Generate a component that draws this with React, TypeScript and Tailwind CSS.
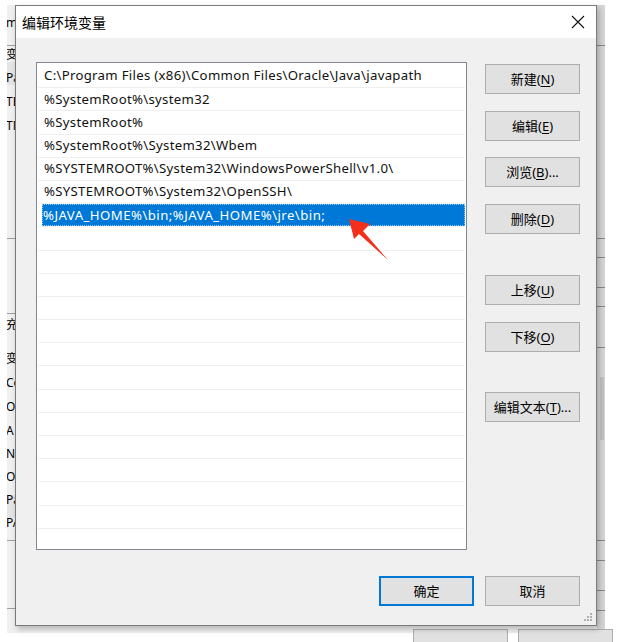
import React from "react";

const rows = [
  "C:\\Program Files (x86)\\Common Files\\Oracle\\Java\\javapath",
  "%SystemRoot%\\system32",
  "%SystemRoot%",
  "%SystemRoot%\\System32\\Wbem",
  "%SYSTEMROOT%\\System32\\WindowsPowerShell\\v1.0\\",
  "%SYSTEMROOT%\\System32\\OpenSSH\\",
  "%JAVA_HOME%\\bin;%JAVA_HOME%\\jre\\bin;",
];

const FONT = { fontFamily: '"Noto Sans", "Noto Sans CJK SC", sans-serif' };

function Btn({
  label,
  u,
  rest,
  primary,
  className,
}: {
  label: string;
  u?: string;
  rest?: string;
  primary?: boolean;
  className?: string;
}) {
  return (
    <div
      className={
        "h-[30px] w-[95px] flex items-center justify-center bg-[#e1e1e1] text-[13px] text-black leading-none " +
        (primary ? "border-2 border-[#0078d7] " : "border border-[#adadad] ") +
        (className || "")
      }
    >
      <span>
        {label}
        {u !== undefined && (
          <>
            (<span className="underline underline-offset-2">{u}</span>){rest}
          </>
        )}
      </span>
    </div>
  );
}

export default function App() {
  const leftTop = [
    { t: "m", y: 17 },
    { t: "变", y: 49 },
    { t: "Pa", y: 72 },
    { t: "TE", y: 96 },
    { t: "TN", y: 120 },
  ];
  const leftBottom = [
    { t: "充", y: 319 },
    { t: "变", y: 353 },
    { t: "Co", y: 377 },
    { t: "Or", y: 401 },
    { t: "A", y: 425 },
    { t: "NU", y: 448 },
    { t: "OS", y: 471 },
    { t: "Pa", y: 494 },
    { t: "PA", y: 517 },
  ];
  const rightLines = [45, 238, 257, 287, 306, 347, 540, 560, 590, 610];
  const leftLines = [45, 238, 313, 540, 608];
  const listRows = Array.from({ length: 21 }, (_, i) => rows[i] ?? "");

  return (
    <div className="relative w-[632px] h-[642px] bg-white overflow-hidden" style={FONT}>
      {/* underlying window */}
      <div className="absolute left-[7px] top-[5px] w-[598px] h-[628px] bg-[#f0f0f0] overflow-hidden">
        {leftLines.map((y) => (
          <div key={"l" + y} className="absolute left-0 w-[8px] h-px bg-[#a0a0a0]" style={{ top: y - 5 }} />
        ))}
        <div className="absolute left-0 top-[57px] w-[8px] h-[23px] bg-[#e5e5e5]" />
        <div className="absolute left-0 top-[490px] w-[8px] h-[23px] bg-[#e5e5e5]" />
        {[...leftTop, ...leftBottom].map((it, i) => (
          <div
            key={i}
            className="absolute left-[-1px] text-[12px] leading-none text-black whitespace-nowrap"
            style={{ top: it.y - 5 }}
          >
            {it.t}
          </div>
        ))}
        <div className="absolute left-[590px] top-0 w-[8px] h-[628px] bg-[#d6d6d6]" />
        {rightLines.map((y) => (
          <div key={"r" + y} className="absolute left-[590px] w-[8px] h-px bg-[#8a8a8a]" style={{ top: y - 5 }} />
        ))}
        <div className="absolute left-[593px] top-[372px] w-[4px] h-[63px] bg-[#c2c2c2]" />
      </div>
      {/* peeking buttons of underlying window */}
      <div className="absolute left-[413px] top-[629px] w-[95px] h-[20px] bg-[#e1e1e1] border border-[#adadad]" />
      <div className="absolute left-[518px] top-[629px] w-[95px] h-[20px] bg-[#e1e1e1] border border-[#adadad]" />

      {/* dialog */}
      <div className="absolute left-[15px] top-[5px] w-[582px] h-[621px] border border-[#7a7a7a] flex flex-col shadow-[2px_3px_6px_rgba(0,0,0,0.25)]">
        <div className="h-[32px] bg-white flex items-center justify-between pl-[6px] pr-[10px]">
          <span className="text-[14px] text-black">编辑环境变量</span>
          <svg width="16" height="16" viewBox="0 0 16 16">
            <path d="M2 2 L14 14 M14 2 L2 14" stroke="#111" strokeWidth="1.1" fill="none" />
          </svg>
        </div>
        <div className="relative flex-1 bg-[#f0f0f0] pt-[24px] pl-[20px] pr-[16px] pb-[19px] flex flex-col">
          <div className="flex gap-[18px]">
            <div className="w-[432px] h-[488px] bg-white border border-[#828790] pt-[2px] pl-[1px] pr-[1px] overflow-hidden">
              {listRows.map((r, i) => {
                const sel = i === 6;
                return (
                  <div key={i} className="h-[23.2px] border-b border-[#efefef] flex">
                    <div
                      className={
                        "flex-1 flex items-center text-[13.2px] tracking-[0.3px] leading-none whitespace-nowrap " +
                        (sel
                          ? "ml-[4px] pl-[1px] tracking-[0.45px] bg-[#0078d7] text-white outline outline-1 outline-dotted outline-[#99c9ef] -outline-offset-1"
                          : "pl-[6px] text-[#111]")
                      }
                    >
                      {r}
                    </div>
                  </div>
                );
              })}
            </div>
            <div className="w-[95px] flex flex-col pt-[2px]">
              <Btn label="新建" u="N" />
              <Btn label="编辑" u="E" className="mt-[17px]" />
              <Btn label="浏览" u="B" rest="..." className="mt-[16px]" />
              <Btn label="删除" u="D" className="mt-[17px]" />
              <Btn label="上移" u="U" className="mt-[41px]" />
              <Btn label="下移" u="O" className="mt-[17px]" />
              <Btn label="编辑文本" u="T" rest="..." className="mt-[40px]" />
            </div>
          </div>
          <div className="mt-auto flex justify-end gap-[11px]">
            <Btn label="确定" primary />
            <Btn label="取消" />
          </div>
          <svg className="absolute right-[3px] bottom-[3px]" width="10" height="10" viewBox="0 0 10 10">
            {[
              [8, 2],
              [5, 5],
              [8, 5],
              [2, 8],
              [5, 8],
              [8, 8],
            ].map(([x, y], i) => (
              <rect key={i} x={x - 1} y={y - 1} width="2" height="2" fill="#b0b0b0" />
            ))}
          </svg>
        </div>
      </div>

      {/* red arrow annotation */}
      <svg className="absolute left-0 top-0 pointer-events-none" width="632" height="642">
        <polygon
          points="349,219 370,224 363,231 388,260 359,234 354,239"
          fill="#f2301c"
        />
      </svg>
    </div>
  );
}
